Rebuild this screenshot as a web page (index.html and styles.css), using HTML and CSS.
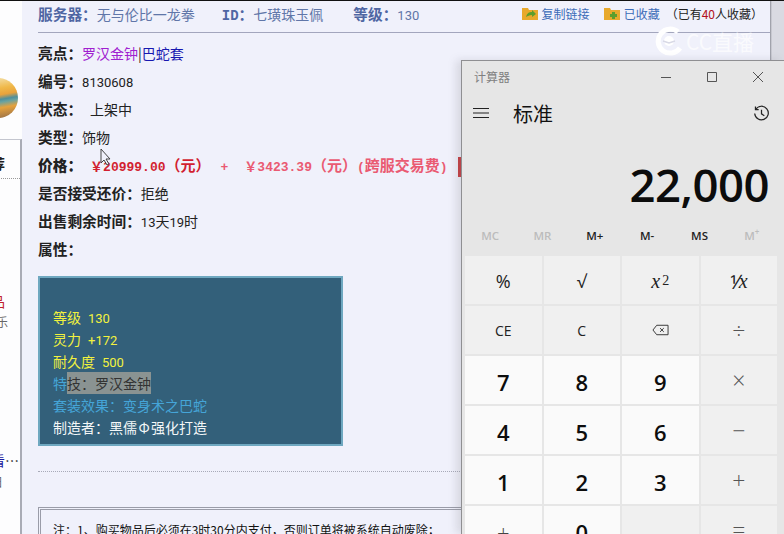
FILE: index.html
```html
<!DOCTYPE html>
<html lang="zh">
<head>
<meta charset="utf-8">
<title>计算器</title>
<link rel="stylesheet" href="styles.css">
</head>
<body>
<div class="page">
  <aside class="side">
    <div class="logo"></div>
    <div class="side-box">
      <div class="side-title">荐</div>
      <div class="side-red">品</div>
      <div class="side-gray">乐</div>
      <div class="side-blue">看<span class="dots">…</span></div>
      <div class="side-gray second">日</div>
    </div>
  </aside>
  <main class="main">
    <header class="head">
      <span class="hitem"><b>服务器：</b>无与伦比一龙拳</span>
      <span class="hitem id"><b class="mono">ID</b><b>：</b>七璜珠玉佩</span>
      <span class="hitem lvl"><b>等级：</b><span class="d">130</span></span>
      <span class="tools">
        <svg class="folder" viewBox="0 0 16 14"><path d="M0 2h6l1 2h9v10H0z" fill="#e8a92c"/><path d="M4 11c1-4 3-5 6-5V4l4 4-4 3V9c-3 0-4 1-6 2z" fill="#5c9e2e"/></svg>
        <span class="tool">复制链接</span>
        <svg class="folder second" viewBox="0 0 16 14"><path d="M0 2h6l1 2h9v10H0z" fill="#e8a92c"/><path d="M8 6h3v2h2v3h-2v2H8v-2H6V8h2z" fill="#5c9e2e"/></svg>
        <span class="tool">已收藏</span>
        <span class="count">（已有<em>40</em>人收藏）</span>
      </span>
    </header>
    <div class="rows">
      <div class="row"><b>亮点：</b><span class="purple">罗汉金钟</span>|<span class="navy">巴蛇套</span></div>
      <div class="row"><b>编号：</b><span class="d">8130608</span></div>
      <div class="row"><b>状态：</b><span class="ind">上架中</span></div>
      <div class="row"><b>类型：</b>饰物</div>
      <div class="row price"><b>价格：</b><span class="p1">￥20999.00<span class="cn">（元）</span></span><span class="p2 plus">+</span><span class="p2">￥3423.39<span class="cn">（元）</span>(<span class="cn">跨服交易费</span>)</span></div>
      <div class="row"><b>是否接受还价：</b>拒绝</div>
      <div class="row"><b>出售剩余时间：</b><span class="d">13</span>天<span class="d">19</span>时</div>
      <div class="row"><b>属性：</b></div>
    </div>
    <div class="item">
      <div class="y">等级<span class="d gap">130</span></div>
      <div class="y">灵力<span class="d gap">+172</span></div>
      <div class="y">耐久度<span class="d gap">500</span></div>
      <div class="b">特<span class="sel">技：罗汉金钟</span></div>
      <div class="b">套装效果：变身术之巴蛇</div>
      <div class="w">制造者：黑儒<span class="phi">Φ</span>强化打造</div>
    </div>
    <div class="rule"></div>
    <div class="note">注：1、购买物品后必须在3时30分内支付，否则订单将被系统自动废除；</div>
  </main>
  <div class="gutter"></div>
</div>

<div class="mark">
  <svg class="mark-ic" viewBox="0 0 30 30"><path d="M24 6A12 12 0 1 0 26 22" fill="none" stroke="#fff" stroke-width="5"/><circle cx="15" cy="15" r="5" fill="#fff"/><path d="M9 15l6 2 6-2" stroke="#d8d9e6" stroke-width="1.5" fill="none"/></svg>
  <span>CC直播</span>
</div>
<svg class="cursor" viewBox="0 0 12 18"><path d="M1 1v14l3-3 3 5 2-1-3-5h4z" fill="#f0f1fb" stroke="#444" stroke-width="1"/></svg>
<div class="redbar"></div>

<section class="calc">
  <div class="titlebar">
    <span class="tt">计算器</span>
    <span class="wc">
      <svg viewBox="0 0 12 12"><path d="M1 6.5h10" stroke="#555" fill="none"/></svg>
      <svg viewBox="0 0 12 12"><path d="M1.5 1.5h9v9h-9z" stroke="#555" fill="none"/></svg>
      <svg viewBox="0 0 12 12"><path d="M1 1l10 10M11 1L1 11" stroke="#555" fill="none"/></svg>
    </span>
  </div>
  <div class="modebar">
    <svg class="burger" viewBox="0 0 16 12"><path d="M0 1.5h16M0 6h16M0 10.5h16" stroke="#222" stroke-width="1.2" fill="none"/></svg>
    <span class="mode">标准</span>
    <svg class="hist" viewBox="0 0 18 18"><path d="M3 4.5A7.2 7.2 0 1 1 1.8 9" stroke="#222" stroke-width="1.3" fill="none"/><path d="M2.6 1.5v3.4H6" stroke="#222" stroke-width="1.3" fill="none"/><path d="M9 5v4.4l3 2" stroke="#222" stroke-width="1.3" fill="none"/></svg>
  </div>
  <div class="display">22,000</div>
  <div class="mem">
    <span class="off">MC</span><span class="off">MR</span><span>M+</span><span>M-</span><span>MS</span><span class="off">M<sup>+</sup></span>
  </div>
  <div class="keys">
    <div class="key low">%</div>
    <div class="key low">√</div>
    <div class="key serif low"><i>x</i><sup>2</sup></div>
    <div class="key serif low">⅟<i>x</i></div>
    <div class="key sm">CE</div>
    <div class="key sm">C</div>
    <div class="key"><svg class="bksp" viewBox="0 0 18 12"><path d="M5 1h12v10H5L1 6z" fill="none" stroke="#333"/><path d="M8.5 4l4 4M12.5 4l-4 4" stroke="#333" fill="none"/></svg></div>
    <div class="key op">÷</div>
    <div class="key num">7</div>
    <div class="key num">8</div>
    <div class="key num">9</div>
    <div class="key op">×</div>
    <div class="key num">4</div>
    <div class="key num">5</div>
    <div class="key num">6</div>
    <div class="key op">−</div>
    <div class="key num">1</div>
    <div class="key num">2</div>
    <div class="key num">3</div>
    <div class="key op">+</div>
    <div class="key num thin">±</div>
    <div class="key num">0</div>
    <div class="key"></div>
    <div class="key op">=</div>
  </div>
</section>
</body>
</html>
```
FILE: styles.css
```css
* { box-sizing: border-box; }
html, body { margin: 0; height: 534px; overflow: hidden; }
body { font-family: "Noto Sans CJK SC", "Noto Sans", sans-serif; font-size: 14px; color: #222; background: #f0f1fb; }
.page { display: flex; height: 534px; border-top: 1px solid #111; }

.side { width: 22px; flex: none; background: #fdfdfe; }
.logo { width: 40px; height: 40px; margin: 77px 0 21px -22px; border-radius: 50%;
  background: linear-gradient(170deg, #f3dca0 8%, #f0b848 30%, #e9a23c 44%, #4f8f9c 54%, #6aa3a0 60%, #e6a23c 72%, #8e6a4a 100%); }
.side-box { height: 395px; width: 22px; border-top: 1px solid #c4c6cf; border-right: 2px solid #a9abb5; overflow: hidden; font-size: 14px; }
.side-title { margin-left: -9px; height: 39px; padding-top: 14px; line-height: 18px; font-weight: 700; border-bottom: 1px dotted #999; }
.side-red { margin: 113px 0 0 -9px; color: #c0202c; line-height: 18px; }
.side-gray { margin: 3px 0 0 -4px; color: #666; line-height: 18px; font-size: 12px; }
.side-blue { margin: 120px 0 0 -9px; color: #1a1aa0; line-height: 18px; white-space: nowrap; }
.dots { color: #222; }
.side-gray.second { margin-top: 4px; margin-left: -9px; }

.main { flex: 1; min-width: 0; padding: 0 0 0 16px; background: #f0f1fb; }
.head { display: flex; align-items: center; height: 32px; padding-bottom: 7px; border-bottom: 1px solid #a3a6bd; color: #6076a8; font-size: 14px; white-space: nowrap; }
.head b { color: #4f66a3; font-size: 14.7px; }
.head b.mono { font-family: "Liberation Mono", monospace; font-size: 14px; }
.id { margin-left: 27px; }
.lvl { margin-left: 30px; }
.tools { margin-left: auto; display: flex; align-items: center; font-size: 12px; color: #3c6cb8; }
.folder { width: 16px; height: 14px; margin-right: 4px; }
.folder.second { margin-left: 14px; }
.count { margin-left: 6px; color: #222; margin-right: 7px; }
.count em { font-style: normal; color: #b01020; }

.d { font-family: Roboto, sans-serif; font-size: 13px; }
.gap { margin-left: 7px; }
.rows { padding-top: 6px; }
.row { height: 28px; line-height: 28px; white-space: nowrap; color: #222; }
.row b { color: #222; font-size: 14.7px; }
.purple { color: #a020d0; }
.navy { color: #1818b0; }
.ind { margin-left: 8px; }
.price { font-family: "Liberation Mono", "Noto Sans CJK SC", monospace; font-size: 13px; font-weight: 700; }
.price b { font-family: "Noto Sans CJK SC", sans-serif; }
.cn { font-family: "Noto Sans CJK SC", sans-serif; font-size: 15px; font-weight: 700; }
.p1 { margin-left: 8px; color: #d21f30; }
.p2 { color: #ea5a72; }
.plus { margin: 0 16px 0 10px; }

.item { width: 305px; height: 170px; margin-top: 13px; padding: 28px 12px 0 13px; background: #33607a; border: 2px solid #6fa8c0; outline: 1px solid #33607a; outline-offset: -3px; font-size: 14px; }
.item div { height: 22px; line-height: 22px; white-space: nowrap; }
.y { color: #f2f23e; }
.b { color: #45a5d8; }
.w { color: #f4f7f8; }
.sel { background: #8a9392; color: #333; display: inline-block; height: 22px; }
.phi { display: inline-block; width: 14px; text-align: center; }

.rule { margin-top: 25px; border-top: 1px dotted #a8aab8; }
.note { margin-top: 35px; height: 40px; padding: 11px 0 0 12px; border: 3px double #9a9ca8; border-right: none; font-size: 12px; line-height: 18px; white-space: nowrap; color: #111; }

.gutter { width: 14px; flex: none; background: linear-gradient(90deg, #8e909a 0, #d9dae2 2px, #d9dae2 100%); }

.mark { position: absolute; left: 654px; top: 26px; display: flex; align-items: center; gap: 2px; color: rgba(255, 255, 255, 0.7); font-size: 21px; line-height: 30px; white-space: nowrap; }
.mark-ic { width: 30px; height: 30px; }
.cursor { position: absolute; left: 100px; top: 148px; width: 12px; height: 18px; }
.redbar { position: absolute; left: 458px; top: 157px; width: 3px; height: 20px; background: #c73a3f; }

.calc { position: absolute; left: 461px; top: 60px; width: 323px; height: 474px; background: #e6e6e6; border: 1px solid #8f8f92; border-right: none; border-bottom: none; box-shadow: -5px 0 8px rgba(120, 120, 130, 0.2); display: flex; flex-direction: column; }
.titlebar { height: 31px; flex: none; display: flex; align-items: center; justify-content: space-between; padding: 0 20px 0 12px; }
.tt { font-size: 12px; color: #808080; }
.wc { display: flex; gap: 34px; }
.wc svg { width: 12px; height: 12px; }
.modebar { height: 42px; flex: none; display: flex; align-items: center; padding: 0 14px 0 11px; }
.burger { width: 16px; height: 12px; }
.mode { margin-left: 24px; font-size: 20px; color: #111; }
.hist { margin-left: auto; width: 17px; height: 17px; }
.display { height: 80px; flex: none; padding-right: 15px; text-align: right; font-family: "Open Sans", "Noto Sans", sans-serif; font-size: 45.5px; font-weight: 600; line-height: 100px; color: #0c0c0c; letter-spacing: -0.5px; }
.mem { height: 42px; flex: none; display: grid; grid-template-columns: repeat(6, 1fr); align-items: center; padding: 0 6px 0 2px; text-align: center; font-size: 11.5px; font-weight: 600; color: #222; font-family: "Open Sans", sans-serif; }
.mem .off { color: #bcbcbc; }
.mem sup { font-size: 8px; line-height: 0; }
.keys { flex: 1; display: grid; grid-template-columns: repeat(4, 76.5px); grid-auto-rows: 48px; column-gap: 2px; row-gap: 2px; padding: 0 5px 0 3px; }
.key { background: #f0f0f0; display: flex; align-items: center; justify-content: center; font-family: "Open Sans", sans-serif; font-size: 18px; color: #222; }
.low { padding-top: 2px; }
.sm { font-size: 14px; }
.serif { font-family: "Liberation Serif", serif; font-size: 20px; }
.serif sup { font-size: 14px; line-height: 0; margin-left: 2px; }
.op { font-size: 23px; font-weight: 300; color: #555; }
.num { background: #fafafa; font-size: 22px; font-weight: 600; color: #0d0d0d; padding-top: 3px; }
.thin { font-weight: 300; color: #444; }
.bksp { width: 17px; height: 12px; }
```
